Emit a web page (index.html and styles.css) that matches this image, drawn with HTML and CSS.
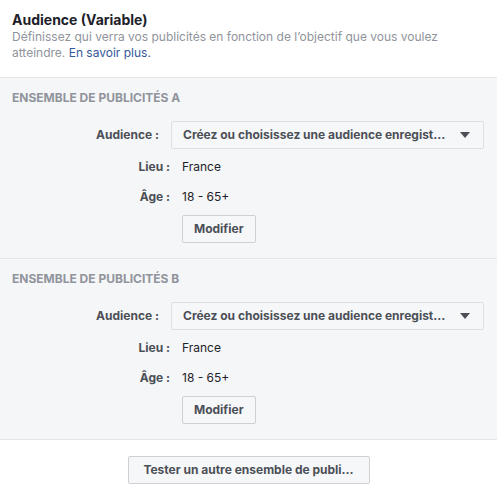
FILE: index.html
```html
<!DOCTYPE html>
<html lang="fr">
<head>
<meta charset="utf-8">
<link rel="stylesheet" href="styles.css">
</head>
<body>
<div class="panel">
  <header class="head">
    <h1 class="title">Audience (Variable)</h1>
    <p class="desc">Définissez qui verra vos publicités en fonction de l’objectif que vous voulez atteindre. <a class="link" href="#">En savoir plus.</a></p>
  </header>

  <section class="adset">
    <h2 class="adset-title">Ensemble de publicités A</h2>
    <div class="row-select">
      <span class="label">Audience :</span>
      <button class="select">
        <span class="select-text">Créez ou choisissez une audience enregist...</span>
        <svg class="caret" width="10" height="6" viewBox="0 0 10 6"><path d="M0 0h10L5 6z" fill="#4b4f56"/></svg>
      </button>
    </div>
    <div class="row-info"><span class="label">Lieu :</span><span class="value">France</span></div>
    <div class="row-info"><span class="label">Âge :</span><span class="value">18 - 65+</span></div>
    <div class="row-action"><button class="btn">Modifier</button></div>
  </section>

  <section class="adset">
    <h2 class="adset-title">Ensemble de publicités B</h2>
    <div class="row-select">
      <span class="label">Audience :</span>
      <button class="select">
        <span class="select-text">Créez ou choisissez une audience enregist...</span>
        <svg class="caret" width="10" height="6" viewBox="0 0 10 6"><path d="M0 0h10L5 6z" fill="#4b4f56"/></svg>
      </button>
    </div>
    <div class="row-info"><span class="label">Lieu :</span><span class="value">France</span></div>
    <div class="row-info"><span class="label">Âge :</span><span class="value">18 - 65+</span></div>
    <div class="row-action"><button class="btn">Modifier</button></div>
  </section>

  <footer class="foot">
    <button class="btn btn-wide">Tester un autre ensemble de publi...</button>
  </footer>
</div>
</body>
</html>
```

FILE: styles.css
```css
* { box-sizing: border-box; }
html, body { margin: 0; padding: 0; background: #fff; }
body {
  font-family: Inter, "Liberation Sans", Arial, sans-serif;
  font-size: 12px;
  line-height: 16px;
  color: #1d2129;
}
.panel { width: 497px; }

.head {
  padding: 11px 12px 16px;
  border-bottom: 1px solid #e5e6e9;
}
.title {
  margin: 0;
  font-size: 14px;
  line-height: 18px;
  font-weight: 700;
  color: #1d2129;
}
.desc {
  margin: 0;
  max-width: 430px;
  color: #90949c;
  font-size: 12px;
  line-height: 16px;
}
.link { color: #365899; text-decoration: none; }

.adset {
  background: #f5f6f7;
  padding: 12px 12px 15px;
  border-bottom: 1px solid #e5e6e9;
}
.adset-title {
  margin: 0 0 15px;
  font-size: 12px;
  line-height: 16px;
  font-weight: 700;
  text-transform: uppercase;
  color: #90949c;
}
.label {
  font-weight: 700;
  color: #4b4f56;
  text-align: right;
}
.row-select {
  display: grid;
  grid-template-columns: 147px 313px;
  column-gap: 12px;
  align-items: center;
}
.select {
  display: flex;
  align-items: center;
  justify-content: space-between;
  height: 28px;
  padding: 0 13px 0 11px;
  background: #f6f7f9;
  border: 1px solid #dddfe2;
  border-radius: 2px;
  font: 700 12px/16px Inter, "Liberation Sans", Arial, sans-serif;
  color: #4b4f56;
}
.row-info {
  display: grid;
  grid-template-columns: 158px 1fr;
  column-gap: 12px;
  margin-top: 10px;
}
.row-info + .row-info { margin-top: 14px; }
.value { color: #1d2129; }
.row-action {
  padding-left: 170px;
  margin-top: 10px;
}
.btn {
  height: 28px;
  padding: 0 11px;
  background: #f6f7f9;
  border: 1px solid #ced0d4;
  border-radius: 2px;
  font: 700 12px/16px Inter, "Liberation Sans", Arial, sans-serif;
  color: #4b4f56;
}
.foot {
  display: flex;
  justify-content: center;
  padding: 16px 0 12px;
}
.btn-wide { width: 242px; padding: 0; }
```
